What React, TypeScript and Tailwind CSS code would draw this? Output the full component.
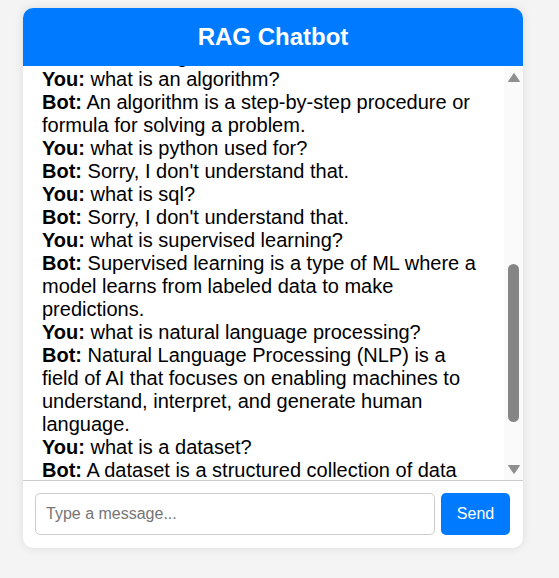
import React, { useEffect, useRef } from 'react';

type Msg = { who: 'You' | 'Bot'; text: string; anchor?: boolean };

const messages: Msg[] = [
  { who: 'You', text: 'hello' },
  { who: 'Bot', text: 'Hello! How can I help you today?' },
  { who: 'You', text: 'what is machine learning?' },
  { who: 'Bot', text: 'Machine learning is a branch of AI that allows computers to learn from data without being explicitly programmed.' },
  { who: 'You', text: 'what is a neural network?' },
  { who: 'Bot', text: 'A neural network is a computing system inspired by the structure of the human brain.' },
  { who: 'You', text: 'what is java?' },
  { who: 'Bot', text: "Sorry, I don't understand that." },
  { who: 'You', text: 'what is deep learning?' },
  { who: 'Bot', text: "Sorry, I don't understand that." },
  { who: 'You', text: 'what is data science?' },
  { who: 'Bot', text: 'Data science combines statistics, programming, and domain knowledge to extract insights from data.' },
  { who: 'You', text: 'what is artificial intelligence?' },
  { who: 'Bot', text: 'Artificial Intelligence refers to the simulation of human intelligence.' },
  { who: 'You', text: 'what is an algorithm?', anchor: true },
  { who: 'Bot', text: 'An algorithm is a step-by-step procedure or formula for solving a problem.' },
  { who: 'You', text: 'what is python used for?' },
  { who: 'Bot', text: "Sorry, I don't understand that." },
  { who: 'You', text: 'what is sql?' },
  { who: 'Bot', text: "Sorry, I don't understand that." },
  { who: 'You', text: 'what is supervised learning?' },
  { who: 'Bot', text: 'Supervised learning is a type of ML where a model learns from labeled data to make predictions.' },
  { who: 'You', text: 'what is natural language processing?' },
  { who: 'Bot', text: 'Natural Language Processing (NLP) is a field of AI that focuses on enabling machines to understand, interpret, and generate human language.' },
  { who: 'You', text: 'what is a dataset?' },
  { who: 'Bot', text: 'A dataset is a structured collection of data that is organized in rows and columns.' },
  { who: 'You', text: 'thank you' },
  { who: 'Bot', text: "You're welcome! Let me know if you have more questions." },
];

export default function App() {
  const boxRef = useRef<HTMLDivElement>(null);
  const anchorRef = useRef<HTMLDivElement>(null);

  useEffect(() => {
    if (boxRef.current && anchorRef.current) {
      boxRef.current.scrollTop = anchorRef.current.offsetTop - 2;
    }
  }, []);

  return (
    <div className="min-h-screen bg-[#f4f4f4] pt-[8px] pl-[23px] font-['Liberation_Sans',Arial,sans-serif]">
      <div className="w-[500px] bg-white rounded-[10px] overflow-hidden shadow-[0_0_10px_rgba(0,0,0,0.1)]">
        {/* Header */}
        <div className="bg-[#007bff] py-[15px] text-center">
          <h2 className="text-[24px] leading-[27.6px] font-bold text-white">RAG Chatbot</h2>
        </div>

        {/* Messages */}
        <div className="relative border-b border-[#ccc]">
          <div
            ref={boxRef}
            className="relative h-[414px] overflow-y-scroll [scrollbar-width:none] [&::-webkit-scrollbar]:hidden pl-[19px] pr-[42px] py-[10px] text-[20px] leading-[23px] text-black"
          >
            {messages.map((m, i) => (
              <div key={i} ref={m.anchor ? anchorRef : undefined}>
                <strong>{m.who}:</strong> {m.text}
              </div>
            ))}
          </div>

          {/* Scrollbar */}
          <div className="absolute top-0 right-0 w-[19px] h-[414px] bg-[#fafafa] flex flex-col items-center pointer-events-none">
            <svg width="12" height="9" viewBox="0 0 12 9" className="mt-[7px] shrink-0">
              <path d="M6 0.5 L11.5 8.5 L0.5 8.5 Z" fill="#8f8f8f" stroke="#8f8f8f" strokeLinejoin="round" />
            </svg>
            <div className="mt-[182px] w-[11px] h-[158px] rounded-full bg-[#858585] shrink-0" />
            <svg width="12" height="9" viewBox="0 0 12 9" className="mt-[43px] shrink-0">
              <path d="M0.5 0.5 L11.5 0.5 L6 8.5 Z" fill="#8f8f8f" stroke="#8f8f8f" strokeLinejoin="round" />
            </svg>
          </div>
        </div>

        {/* Input */}
        <div className="flex gap-[6px] pl-[12px] pr-[13px] pt-[12px] pb-[13px]">
          <input
            type="text"
            placeholder="Type a message..."
            className="flex-1 h-[42px] px-[10px] text-[16px] border border-[#ccc] rounded-[5px] outline-none placeholder:text-[#757575]"
          />
          <button className="w-[69px] h-[42px] bg-[#007bff] text-white text-[16px] rounded-[5px]">
            Send
          </button>
        </div>
      </div>
    </div>
  );
}
